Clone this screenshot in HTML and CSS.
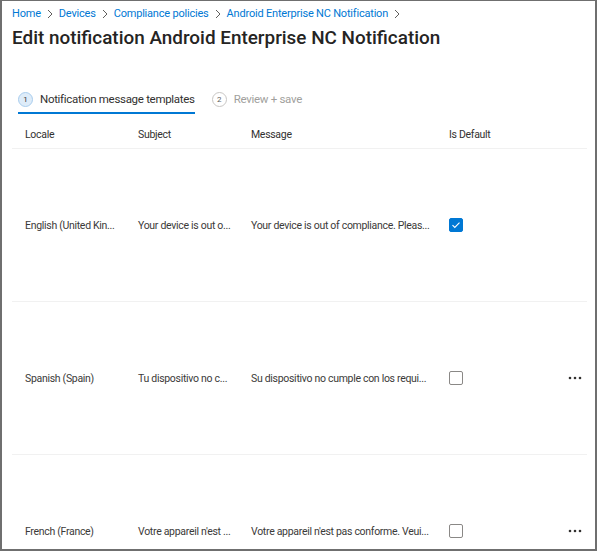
FILE: index.html
```html
<!DOCTYPE html>
<html lang="en">
<head>
<meta charset="utf-8">
<title>Edit notification</title>
<link rel="stylesheet" href="styles.css">
</head>
<body>
<div class="frame">
  <nav class="crumbs">
    <a class="crumb">Home</a>
    <svg class="chev" viewBox="0 0 8 10" width="8" height="10"><path d="M2 1l4 4-4 4" fill="none" stroke="#605e5c" stroke-width="1"/></svg>
    <a class="crumb">Devices</a>
    <svg class="chev" viewBox="0 0 8 10" width="8" height="10"><path d="M2 1l4 4-4 4" fill="none" stroke="#605e5c" stroke-width="1"/></svg>
    <a class="crumb">Compliance policies</a>
    <svg class="chev" viewBox="0 0 8 10" width="8" height="10"><path d="M2 1l4 4-4 4" fill="none" stroke="#605e5c" stroke-width="1"/></svg>
    <a class="crumb">Android Enterprise NC Notification</a>
    <svg class="chev" viewBox="0 0 8 10" width="8" height="10"><path d="M2 1l4 4-4 4" fill="none" stroke="#605e5c" stroke-width="1"/></svg>
  </nav>
  <h1 class="title">Edit notification Android Enterprise NC Notification</h1>

  <div class="tabs">
    <div class="tab active"><span class="num">1</span><span>Notification message templates</span></div>
    <div class="tab"><span class="num">2</span><span>Review + save</span></div>
  </div>

  <div class="table">
    <div class="row head">
      <div class="cell">Locale</div>
      <div class="cell">Subject</div>
      <div class="cell">Message</div>
      <div class="cell">Is Default</div>
      <div class="cell"></div>
    </div>
    <div class="row">
      <div class="cell">English (United Kin...</div>
      <div class="cell">Your device is out o...</div>
      <div class="cell">Your device is out of compliance. Pleas...</div>
      <div class="cell"><span class="box checked"><svg viewBox="0 0 14 14" width="14" height="14"><path d="M3.5 7.2l2.3 2.3 4.7-4.8" fill="none" stroke="#fff" stroke-width="1.1"/></svg></span></div>
      <div class="cell"></div>
    </div>
    <div class="row">
      <div class="cell">Spanish (Spain)</div>
      <div class="cell">Tu dispositivo no c...</div>
      <div class="cell">Su dispositivo no cumple con los requi...</div>
      <div class="cell"><span class="box"></span></div>
      <div class="cell more"><svg viewBox="0 0 14 4" width="14" height="4"><circle cx="2" cy="2" r="1.3" fill="#323130"/><circle cx="7" cy="2" r="1.3" fill="#323130"/><circle cx="12" cy="2" r="1.3" fill="#323130"/></svg></div>
    </div>
    <div class="row">
      <div class="cell">French (France)</div>
      <div class="cell">Votre appareil n'est ...</div>
      <div class="cell">Votre appareil n'est pas conforme. Veui...</div>
      <div class="cell"><span class="box"></span></div>
      <div class="cell more"><svg viewBox="0 0 14 4" width="14" height="4"><circle cx="2" cy="2" r="1.3" fill="#323130"/><circle cx="7" cy="2" r="1.3" fill="#323130"/><circle cx="12" cy="2" r="1.3" fill="#323130"/></svg></div>
    </div>
  </div>
</div>
</body>
</html>
```
FILE: styles.css
```css
html, body {
  margin: 0;
  padding: 0;
  background: #fff;
}
body {
  font-family: Roboto, "Noto Sans", sans-serif;
  color: #323130;
}
.frame {
  width: 597px;
  height: 551px;
  box-sizing: border-box;
  border: 2px solid #6f6f6f;
  border-top-width: 1px;
  padding: 5px 8px 0 10px;
  overflow: hidden;
}
.crumbs {
  display: flex;
  align-items: center;
  gap: 4px;
  font-size: 11px;
  letter-spacing: -0.2px;
  line-height: 16px;
  height: 16px;
}
.crumb {
  color: #0078d4;
}
.chev {
  margin: 0 1px;
}
.title {
  margin: 2px 0 0;
  font-size: 18.9px;
  font-weight: 500;
  line-height: 28px;
  color: #252423;
}
.tabs {
  display: flex;
  gap: 17px;
  margin: 35px 0 0 6px;
}
.tab {
  display: flex;
  align-items: center;
  gap: 7px;
  font-size: 11.5px;
  letter-spacing: -0.3px;
  line-height: 16px;
  padding: 4px 0 5px;
  color: #a19f9d;
  border-bottom: 2px solid transparent;
}
.tab.active {
  color: #323130;
  border-bottom-color: #0078d4;
}
.num {
  width: 13px;
  height: 13px;
  border: 1px solid #c8c6c4;
  border-radius: 50%;
  font-size: 8px;
  letter-spacing: 0;
  line-height: 13px;
  text-align: center;
  color: #605e5c;
}
.tab.active .num {
  background: #deecf9;
  border-color: #a9cdee;
  color: #323130;
}
.table {
  margin-top: 7px;
}
.row {
  display: grid;
  grid-template-columns: 113px 113px 198px 1fr 24px;
  align-items: center;
  height: 153px;
  box-sizing: border-box;
  border-bottom: 1px solid #f1f1f1;
  font-size: 10.5px;
  letter-spacing: -0.3px;
}
.row.head {
  height: 28px;
}
.cell {
  padding-left: 13px;
  white-space: nowrap;
  overflow: hidden;
  text-overflow: ellipsis;
  color: #323130;
}
.row:not(.head) .cell {
  color: #3b3a39;
}
.cell.more {
  padding-left: 0;
  display: flex;
  justify-content: center;
}
.box {
  display: block;
  width: 14px;
  height: 14px;
  box-sizing: border-box;
  border: 1px solid #8a8886;
  border-radius: 2px;
}
.box.checked {
  background: #0078d4;
  border-color: #0078d4;
}
.box.checked svg {
  display: block;
  margin: -1px;
}
```
